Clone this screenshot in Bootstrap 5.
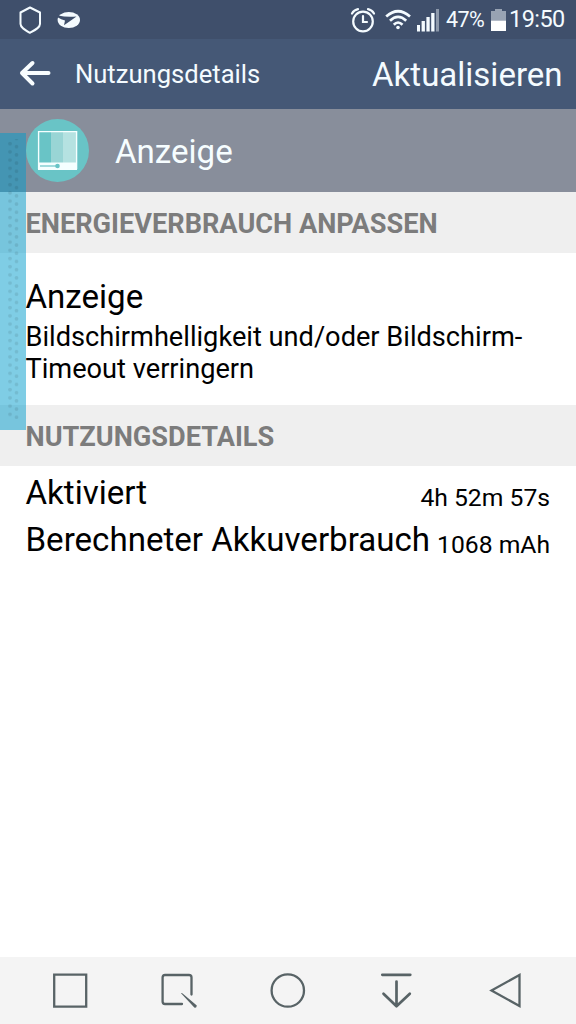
<!DOCTYPE html>
<html lang="de">
<head>
<meta charset="utf-8">
<meta name="viewport" content="width=device-width, initial-scale=1">
<title>Nutzungsdetails</title>
<link href="https://cdn.jsdelivr.net/npm/bootstrap@5.3.0/dist/css/bootstrap.min.css" rel="stylesheet">
<style>
body{font-family:Roboto,"Liberation Sans",sans-serif;color:#000;background:#fff;overflow:hidden}
svg{display:block;flex:none}
.phone{height:1024px}
.statusbar{height:39px;background:#3f4f6b;color:#f4fbff;padding:0 12px 0 18px}
.status-icons{display:grid;grid-template-columns:35px 32px 29px 45px 18px 55px;align-items:center}
.logo-swoosh{margin-left:15px}
.pct{font-size:21.5px;line-height:41px;letter-spacing:-.6px}
.clock{font-size:23.5px;line-height:41px;letter-spacing:-.55px}
.appbar{height:70px;background:#455876;color:#f4fbff;padding:0 13.5px 0 18px}
.app-title{font-size:25.6px;line-height:70px;margin-left:23px}
.app-action{font-size:33px;line-height:70px;padding-top:1px}
.hero{height:83px;background:#888e9b;color:#f6fdff;padding-left:25px}
.hero-title{margin-left:26px;padding-top:3px}
.t-lg{font-size:33.1px;line-height:40px}
.t-md{font-size:27.2px;line-height:32px}
.t-val{font-size:24.7px;line-height:30px;padding-top:10px}
.section-head{height:61px;background:#efefef;color:#7c7c7c;font-size:27.15px;font-weight:700;line-height:64px;padding-left:25.5px;white-space:nowrap}
.pref{height:152px;padding:24px 25px 0 25.5px}
.usage{padding:7px 26px 0 25.5px;white-space:nowrap}
.usage-row{height:47px}
.edge{left:0;top:133px;width:26px;height:297px;background:rgba(0,155,203,.5)}
.edge svg{margin-left:7px}
.softkeys{height:67px;background:#f4f4f4;padding:0 52px}
</style>
</head>
<body>
<div class="phone d-flex flex-column position-relative">
  <header class="statusbar d-flex align-items-center">
    <svg width="24" height="30" viewBox="0 0 24 30" fill="none" stroke="#f4fbff" stroke-width="2" stroke-linejoin="round"><path d="M12 2.500 22 7.500V19c0 3.500-5 6-10 8.800C7 25 2.500 22.500 2.500 19V7.500z"/></svg>
    <svg class="logo-swoosh" width="24" height="18" viewBox="0 0 24 18"><ellipse cx="11.800" cy="9" rx="11.200" ry="8" fill="#f4fbff"/><path d="M1 4.500Q10 6.500 19.500 5.500Q14 9.500 7 14.200L8 9.500Q4 8.500 1 6.500z" fill="#3f4f6b"/></svg>
    <div class="status-icons ms-auto">
      <svg width="26" height="26" viewBox="0 0 26 26" fill="none" stroke="#f4fbff" stroke-width="2.200" stroke-linecap="round"><circle cx="13" cy="14.500" r="9.800"/><path d="M13 9v6h4M2 6.500Q4 3 8 2.200M24 6.500Q22 3 18 2.200"/></svg>
      <svg width="28" height="22" viewBox="0 0 28 22" fill="none" stroke="#f4fbff" stroke-width="2.700"><path d="M1.200 7.500Q13-3 25 7.500M5 11.700Q13 4 21.200 11.700M8.800 15.700Q13 11.300 17.500 15.700"/><circle cx="13" cy="18.500" r="1.800" fill="#f4fbff" stroke="none"/></svg>
      <svg width="23" height="24" viewBox="0 0 23 24" fill="#f4fbff"><path d="M0 17h3v6.500H0zM4.600 13h3.300v10.500H4.600zM9.400 9h3.300v14.500H9.400zM14.200 5h3.300v18.500h-3.300z"/><path d="M19 1h3v22.500h-3z" fill="#8c98aa"/></svg>
      <span class="pct">47%</span>
      <svg width="15" height="24" viewBox="0 0 15 24"><path d="M4 1h7v2h4v9.500H0V3h4z" fill="#98a3b3"/><path d="M0 12.500h15V23H0z" fill="#fff"/></svg>
      <span class="clock">19:50</span>
    </div>
  </header>
  <nav class="appbar d-flex align-items-center">
    <svg width="34" height="28" viewBox="0 0 34 28" fill="none" stroke="#f8fdff" stroke-width="4" stroke-linecap="round" stroke-linejoin="round"><path d="M30.500 13H4M14.500 3 4 13l10.500 10.500"/></svg>
    <span class="app-title">Nutzungsdetails</span>
    <span class="app-action ms-auto">Aktualisieren</span>
  </nav>
  <div class="hero d-flex align-items-center">
    <svg width="64" height="64" viewBox="0 0 64 64"><circle cx="32.500" cy="31.500" r="31.500" fill="#69c4c6"/><path d="M26 13h12v32H26z" fill="#99d5d5"/><path d="M38 13h13v32H38z" fill="#b5e2e1"/><path d="M13.600 12.600h38v37h-38z" fill="none" stroke="#f5ffff" stroke-width="1.400"/><path d="M13 43.500h39V51H13z" fill="#f5ffff"/><path d="M15 47h16" stroke="#69c4c6" stroke-width="1.200"/><circle cx="32.500" cy="47" r="2.300" fill="#69c4c6"/></svg>
    <span class="t-lg hero-title">Anzeige</span>
  </div>
  <div class="section-head">ENERGIEVERBRAUCH ANPASSEN</div>
  <div class="pref">
    <div class="t-lg">Anzeige</div>
    <div class="t-md pt-1">Bildschirmhelligkeit und/oder Bildschirm-<br>Timeout verringern</div>
  </div>
  <div class="section-head">NUTZUNGSDETAILS</div>
  <div class="usage">
    <div class="usage-row d-flex justify-content-between"><span class="t-lg">Aktiviert</span><span class="t-val">4h 52m 57s</span></div>
    <div class="usage-row d-flex justify-content-between"><span class="t-lg">Berechneter Akkuverbrauch</span><span class="t-val">1068 mAh</span></div>
  </div>
  <footer class="softkeys mt-auto d-flex align-items-center justify-content-between">
    <svg width="36" height="36" viewBox="0 0 36 36" fill="none" stroke="#586366" stroke-width="2.300"><path d="M2.200 1.700h32v32h-32z"/></svg>
    <svg width="36" height="36" viewBox="0 0 36 36" fill="none" stroke="#586366" stroke-width="2.300" stroke-linecap="round"><path d="M21 31H4Q1.600 31 1.600 28.500V4.500Q1.600 2 4 2h24Q30.500 2 30.500 4.500V21.500"/><path d="M20 20.200 33.300 34.500Q35.500 35.500 35.800 32.500L22.500 21.300Q20.500 19.500 20 20.200z" fill="#586366" stroke="none"/></svg>
    <svg width="36" height="36" viewBox="0 0 36 36" fill="none" stroke="#586366" stroke-width="2.300"><circle cx="17.800" cy="17.500" r="16.200"/></svg>
    <svg width="36" height="36" viewBox="0 0 36 36" fill="none" stroke="#586366" stroke-width="2.700" stroke-linecap="round" stroke-linejoin="round"><path d="M3.300 1.800h28M17.500 8.500V33M4.500 20.700 17.500 33.300 30.800 20.700"/></svg>
    <svg width="36" height="36" viewBox="0 0 36 36" fill="none" stroke="#586366" stroke-width="2.300" stroke-linejoin="miter"><path d="M31.500 2v31L3.500 17.500z"/></svg>
  </footer>
  <div class="edge position-absolute">
    <svg width="14" height="290"><defs><pattern id="grip" width="14" height="8.200" patternUnits="userSpaceOnUse"><circle cx="3" cy="2.500" r="1.900"/><circle cx="9.500" cy="5.500" r="1.900"/></pattern></defs><rect y="6" width="14" height="280" fill="url(#grip)" opacity=".09"/></svg>
  </div>
</div>
<script src="https://cdn.jsdelivr.net/npm/bootstrap@5.3.0/dist/js/bootstrap.bundle.min.js"></script>
</body>
</html>
